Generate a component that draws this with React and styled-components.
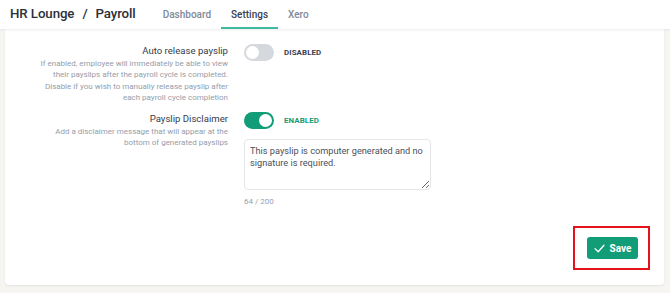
import React, { useState } from 'react';
import styled, { createGlobalStyle } from 'styled-components';

const GlobalStyle = createGlobalStyle`
  html, body {
    margin: 0;
    padding: 0;
    background: #f7f5f1;
    font-family: Roboto, 'Liberation Sans', sans-serif;
  }
  * { box-sizing: border-box; }
`;

const green = '#139c78';

const Page = styled.div`
  width: 670px;
  height: 293px;
  overflow: hidden;
  display: flex;
  flex-direction: column;
`;

const Header = styled.header`
  height: 29px;
  background: #fff;
  display: flex;
  align-items: stretch;
  padding-left: 10px;
  box-shadow: 0 1px 2px rgba(0, 0, 0, 0.08);
  position: relative;
  z-index: 2;
`;

const Title = styled.h1`
  margin: 0;
  font-size: 13.3px;
  font-weight: 500;
  letter-spacing: -0.1px;
  color: #2b303b;
  display: flex;
  align-items: center;
  gap: 8px;
  margin-top: -3px;
  margin-right: 17px;
`;

const Tabs = styled.nav`
  display: flex;
  align-items: stretch;
`;

const Tab = styled.a`
  padding: 0 10px;
  font-size: 10px;
  font-weight: 500;
  display: flex;
  align-items: center;
  color: ${p => (p.$active ? '#3a4150' : '#808998')};
  border-bottom: 2px solid ${p => (p.$active ? '#3fb99b' : 'transparent')};
  padding-top: 2px;
  cursor: pointer;
`;

const Card = styled.main`
  flex: 1;
  margin: 0 6px 8px 5px;
  background: #fff;
  border-radius: 0 0 4px 4px;
  box-shadow: 0 1px 2px rgba(0, 0, 0, 0.08);
  padding: 15px 14px 15px 0;
  display: flex;
  flex-direction: column;
`;

const Row = styled.div`
  display: grid;
  grid-template-columns: 223px 1fr;
  column-gap: 16px;
  margin-bottom: ${p => p.$gap || 0}px;
`;

const Info = styled.div`
  text-align: right;
`;

const Label = styled.div`
  font-size: 9.6px;
  color: #363c48;
  line-height: 12px;
  margin-top: 1px;
`;

const Desc = styled.div`
  font-size: 8px;
  line-height: 11.3px;
  color: #959dab;
  margin-top: 1px;
`;

const Control = styled.div`
  display: flex;
  flex-direction: column;
  align-items: flex-start;
`;

const SwitchLine = styled.div`
  display: flex;
  align-items: center;
  gap: 10px;
`;

const Switch = styled.button`
  width: 30px;
  height: 17px;
  border-radius: 9px;
  border: none;
  padding: 0;
  background: ${p => (p.$on ? green : '#d5d8dd')};
  position: relative;
  cursor: pointer;

  &::after {
    content: '';
    position: absolute;
    top: 2px;
    left: ${p => (p.$on ? '15px' : '2px')};
    width: 13px;
    height: 13px;
    border-radius: 50%;
    background: #fff;
  }
`;

const State = styled.span`
  font-size: 7.9px;
  font-weight: 700;
  letter-spacing: 0.1px;
  color: ${p => (p.$on ? green : '#3a4150')};
`;

const TextArea = styled.textarea`
  margin-top: 10px;
  width: 187px;
  height: 51px;
  border: 1px solid #e4e6ea;
  border-radius: 4px;
  padding: 5px 5px;
  font-family: Roboto, 'Liberation Sans', sans-serif;
  font-size: 9.2px;
  line-height: 11.5px;
  color: #4a505c;
  resize: vertical;
  outline: none;
`;

const Counter = styled.div`
  margin-top: 7px;
  font-size: 8px;
  color: #98a0ad;
`;

const Footer = styled.div`
  margin-top: auto;
  display: flex;
  justify-content: flex-end;
`;

const Highlight = styled.div`
  border: 2px solid #e3121b;
  padding: 9px 10px 9px 12px;
`;

const SaveButton = styled.button`
  height: 22px;
  width: 51px;
  border: none;
  border-radius: 3px;
  background: ${green};
  color: #fff;
  font-family: Roboto, 'Liberation Sans', sans-serif;
  font-size: 10px;
  font-weight: 700;
  display: flex;
  align-items: center;
  justify-content: center;
  gap: 5px;
  padding: 0;
  cursor: pointer;
`;

const Check = () => (
  <svg width="11" height="9" viewBox="0 0 11 9" fill="none">
    <path d="M1 4.6l3.2 3.2L10 1.2" stroke="#fff" strokeWidth="1.3" strokeLinecap="round" strokeLinejoin="round" />
  </svg>
);

export default function App() {
  const [autoRelease, setAutoRelease] = useState(false);
  const [disclaimer, setDisclaimer] = useState(true);
  const [text, setText] = useState('This payslip is computer generated and no signature is required.');

  return (
    <Page>
      <GlobalStyle />
      <Header>
        <Title>
          <span>HR Lounge</span>
          <span>/</span>
          <span>Payroll</span>
        </Title>
        <Tabs>
          <Tab>Dashboard</Tab>
          <Tab $active>Settings</Tab>
          <Tab>Xero</Tab>
        </Tabs>
      </Header>
      <Card>
        <Row $gap={9}>
          <Info>
            <Label>Auto release payslip</Label>
            <Desc>
              If enabled, employee will immediately be able to view
              <br />
              their payslips after the payroll cycle is completed.
              <br />
              Disable if you wish to manually release payslip after
              <br />
              each payroll cycle completion
            </Desc>
          </Info>
          <Control>
            <SwitchLine>
              <Switch $on={autoRelease} onClick={() => setAutoRelease(v => !v)} />
              <State $on={autoRelease}>{autoRelease ? 'ENABLED' : 'DISABLED'}</State>
            </SwitchLine>
          </Control>
        </Row>
        <Row>
          <Info>
            <Label>Payslip Disclaimer</Label>
            <Desc>
              Add a disclaimer message that will appear at the
              <br />
              bottom of generated payslips
            </Desc>
          </Info>
          <Control>
            <SwitchLine>
              <Switch $on={disclaimer} onClick={() => setDisclaimer(v => !v)} />
              <State $on={disclaimer}>{disclaimer ? 'ENABLED' : 'DISABLED'}</State>
            </SwitchLine>
            <TextArea value={text} maxLength={200} onChange={e => setText(e.target.value)} />
            <Counter>{text.length} / 200</Counter>
          </Control>
        </Row>
        <Footer>
          <Highlight>
            <SaveButton>
              <Check />
              Save
            </SaveButton>
          </Highlight>
        </Footer>
      </Card>
    </Page>
  );
}
